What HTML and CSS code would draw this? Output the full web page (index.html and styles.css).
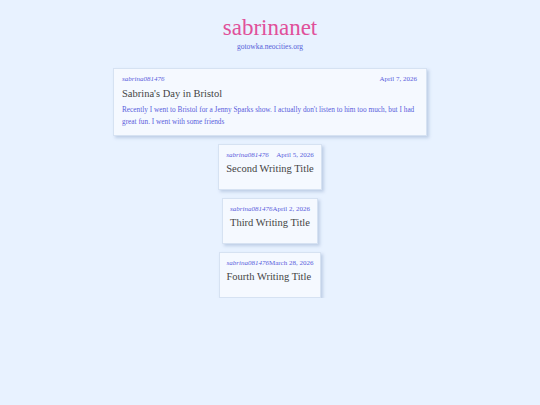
FILE: index.html
```html
<!DOCTYPE html>
<html>
<head>
<meta charset="utf-8">
<link rel="stylesheet" href="styles.css">
</head>
<body>
<header class="site-header">
  <h1 class="site-title">sabrinanet</h1>
  <div class="site-url">gotowka.neocities.org</div>
</header>
<main class="posts">
  <article class="post post-full">
    <div class="meta"><span class="author">sabrina081476</span><span class="date">April 7, 2026</span></div>
    <h2 class="post-title">Sabrina's Day in Bristol</h2>
    <p class="excerpt">Recently I went to Bristol for a Jenny Sparks show. I actually don't listen to him too much, but I had great fun. I went with some friends</p>
  </article>
  <article class="post">
    <div class="meta"><span class="author">sabrina081476</span><span class="date">April 5, 2026</span></div>
    <h2 class="post-title">Second Writing Title</h2>
  </article>
  <article class="post">
    <div class="meta"><span class="author">sabrina081476</span><span class="date">April 2, 2026</span></div>
    <h2 class="post-title">Third Writing Title</h2>
  </article>
  <article class="post">
    <div class="meta"><span class="author">sabrina081476</span><span class="date">March 28, 2026</span></div>
    <h2 class="post-title">Fourth Writing Title</h2>
  </article>
</main>
</body>
</html>
```
FILE: styles.css
```css
html, body {
  margin: 0;
  padding: 0;
  background: #e8f2ff;
  font-family: "Liberation Serif", "DejaVu Serif", serif;
}
body {
  padding-top: 14px;
}
.site-header {
  text-align: center;
}
.site-title {
  margin: 0;
  font-size: 23px;
  font-weight: normal;
  color: #e0509a;
  line-height: 28px;
}
.site-url {
  font-size: 7.5px;
  color: #5560d8;
  line-height: 10px;
}
.posts {
  display: flex;
  flex-direction: column;
  align-items: center;
  gap: 8px;
  margin-top: 16px;
}
.post {
  background: #f5f9ff;
  border: 1px solid #d6e2f2;
  box-shadow: 2px 2px 3px rgba(140, 165, 200, 0.45);
  padding: 5px 7px 13px;
}
.post-full {
  width: 295px;
  padding: 5px 9px 7px 8px;
}
.meta {
  display: flex;
  justify-content: space-between;
  gap: 0;
  font-size: 7px;
  color: #5a5ddc;
  line-height: 10px;
}
.author {
  font-style: italic;
}
.post-title {
  margin: 2px 0 0;
  font-size: 10.5px;
  font-weight: normal;
  color: #444;
  line-height: 14px;
}
.post-full .post-title {
  margin-top: 3px;
}
.excerpt {
  margin: 3px 0 0;
  font-size: 7.3px;
  line-height: 12px;
  color: #5a5ddc;
}
```
